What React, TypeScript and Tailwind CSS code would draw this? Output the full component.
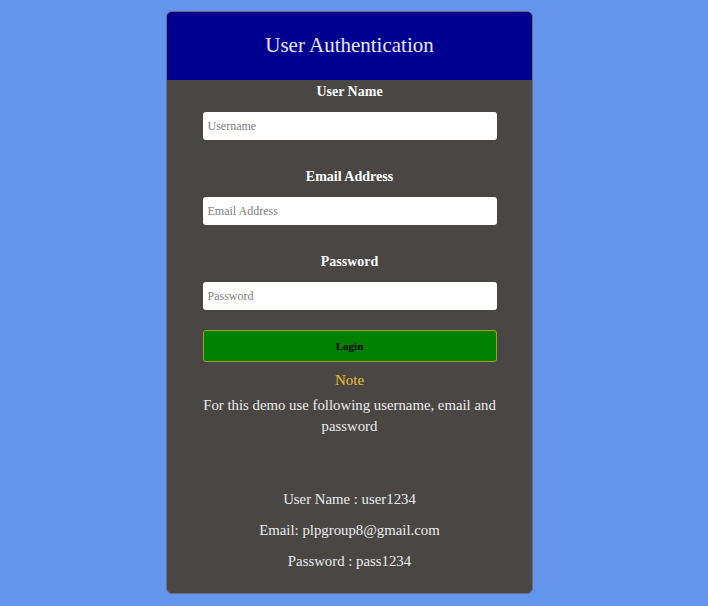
export default function App() {
  const serif = { fontFamily: '"Liberation Serif", "Times New Roman", serif' };
  return (
    <div className="min-h-[606px] w-full bg-[#6495ed] flex justify-center pt-[11px] pr-[9px]" style={serif}>
      <div className="w-[367px] h-[583px] rounded-[6px] border border-[#6b6b80] bg-[#4a4644] overflow-hidden flex flex-col items-center">
        <div className="w-full h-[68px] bg-[#000090] flex items-center justify-center pb-[2px]">
          <h1 className="text-[21px] text-[#e6e6fa] leading-none">User Authentication</h1>
        </div>
        <label className="mt-[3px] text-[14px] leading-[17px] font-bold text-white">User Name</label>
        <input
          placeholder="Username"
          className="mt-[12px] w-[294px] h-[28px] rounded-[3px] bg-white px-[5px] text-[12px] placeholder:text-[#808080] outline-none"
          style={serif}
        />
        <label className="mt-[28px] text-[14px] leading-[17px] font-bold text-white">Email Address</label>
        <input
          placeholder="Email Address"
          className="mt-[12px] w-[294px] h-[28px] rounded-[3px] bg-white px-[5px] text-[12px] placeholder:text-[#808080] outline-none"
          style={serif}
        />
        <label className="mt-[28px] text-[14px] leading-[17px] font-bold text-white">Password</label>
        <input
          placeholder="Password"
          className="mt-[12px] w-[294px] h-[28px] rounded-[3px] bg-white px-[5px] text-[12px] placeholder:text-[#808080] outline-none"
          style={serif}
        />
        <button
          className="mt-[20px] w-[294px] h-[32px] rounded-[3px] bg-[#008000] border border-[#a0a020] text-[11px] font-bold text-black"
          style={serif}
        >
          Login
        </button>
        <div className="mt-[9px] text-[15px] leading-[18px] text-[#e8c030]">Note</div>
        <p className="mt-[6px] w-[300px] text-center text-[14.8px] leading-[21px] text-[#ececec]">
          For this demo use following username, email and password
        </p>
        <div className="mt-[54px] flex flex-col items-center gap-[14px] text-[14.8px] leading-[17px] text-[#ececec]">
          <div>User Name : user1234</div>
          <div>Email: plpgroup8@gmail.com</div>
          <div>Password : pass1234</div>
        </div>
      </div>
    </div>
  );
}
